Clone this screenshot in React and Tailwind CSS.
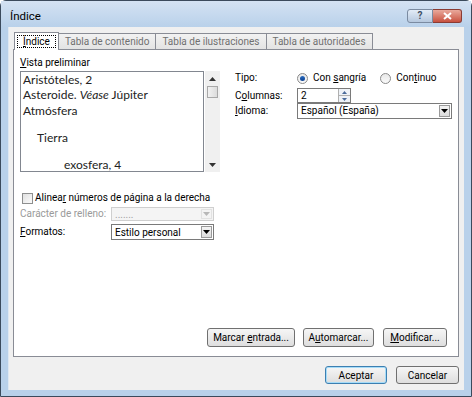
import React from 'react';

const U = ({ children }) => <span className="underline underline-offset-[1px]">{children}</span>;

const Arrow = ({ up = false, className = '' }) => (
  <svg width="7" height="4" viewBox="0 0 7 4" className={className}>
    {up ? <path d="M0 4 L7 4 L3.5 0 Z" fill="currentColor" /> : <path d="M0 0 L7 0 L3.5 4 Z" fill="currentColor" />}
  </svg>
);

const Button = ({ children, className = '', primary = false }) => (
  <div
    className={`flex items-center justify-center whitespace-nowrap rounded-[3px] border bg-gradient-to-b from-[#f6f6f6] to-[#dedede] text-[10px] text-black ${
      primary ? 'border-[#3c7fb1] shadow-[inset_0_0_0_1px_#a6dcf8]' : 'border-[#707070]'
    } ${className}`}
  >
    <span>{children}</span>
  </div>
);

const Combo = ({ value, className = '', disabled = false }) => (
  <div className={`flex items-stretch border ${disabled ? 'border-[#cfcfcf] bg-[#f4f4f4]' : 'border-[#7a7a7a] bg-white'} ${className}`}>
    <div className={`flex flex-1 items-center whitespace-nowrap pl-[3px] text-[10px] ${disabled ? 'text-[#a0a0a0]' : 'text-black'}`}>{value}</div>
    <div
      className={`m-[1px] flex w-[11px] items-center justify-center border ${
        disabled ? 'border-[#e2e2e2] text-[#b8b8b8]' : 'border-[#9a9a9a] bg-gradient-to-b from-[#f4f4f4] to-[#dcdcdc] text-black'
      }`}
    >
      <Arrow />
    </div>
  </div>
);

const Radio = ({ checked }) => (
  <div className="flex h-[11px] w-[11px] items-center justify-center rounded-full border border-[#8a8a8a] bg-gradient-to-b from-[#e8e8e8] to-[#fafafa]">
    {checked && <div className="h-[5px] w-[5px] rounded-full bg-gradient-to-b from-[#2a6cc0] to-[#0b3f8f]" />}
  </div>
);

const Tab = ({ children, active = false }) =>
  active ? (
    <div className="relative z-10 -mb-[1px] flex h-[18px] items-center border border-b-0 border-[#898c95] bg-white px-[2px]">
      <div className="flex h-[13px] items-center whitespace-nowrap border border-dotted border-black px-[5px] text-[10px] text-black">
        <span>{children}</span>
      </div>
    </div>
  ) : (
    <div className="mt-[1px] flex h-[16px] items-center whitespace-nowrap border border-b-0 border-l-0 border-[#898c95] bg-gradient-to-b from-[#f2f2f2] to-[#e3e3e3] px-[6px] text-[10px] text-[#707070]">
      {children}
    </div>
  );

const entries = [
  { text: 'Aristóteles, 2', cls: 'pl-[2px] mt-[1px]' },
  { text: null, cls: 'pl-[2px] mt-[2px]' },
  { text: 'Atmósfera', cls: 'pl-[2px] mt-[3px]' },
  { text: 'Tierra', cls: 'pl-[16px] mt-[14px]' },
  { text: 'exosfera, 4', cls: 'pl-[43px] mt-[14px]' },
];

export default function App() {
  return (
    <div className="h-[397px] w-[472px] bg-white font-['Roboto',sans-serif]">
      <div className="flex h-full w-full flex-col rounded-t-[6px] border border-[#3b4a5c] bg-[#b9d1ea] px-[7px] pb-[6px]">
        {/* Title bar */}
        <div className="-mx-[7px] flex h-[26px] items-start bg-gradient-to-b from-[#d4e2f3] to-[#b9d1ea] px-[9px]">
          <div className="mt-[8px] text-[11.5px] leading-[14px] text-black">Índice</div>
          <div className="ml-auto mt-[8px] flex">
            <div className="flex h-[14px] w-[26px] items-center justify-center rounded-l-[3px] border border-[#7b8ba1] bg-gradient-to-b from-[#e3ecf7] to-[#b6c8de] text-[10px] font-bold leading-none text-[#3f4f66]">
              ?
            </div>
            <div className="flex h-[14px] w-[29px] items-center justify-center rounded-r-[3px] border border-l-0 border-[#8a3b33] bg-gradient-to-b from-[#e9a99c] to-[#c7503f]">
              <svg width="9" height="8" viewBox="0 0 9 8">
                <path d="M1 1 L8 7 M8 1 L1 7" stroke="white" strokeWidth="2" />
              </svg>
            </div>
          </div>
        </div>

        {/* Client area */}
        <div className="flex flex-1 flex-col border-l border-[#dfe8f2] bg-[#f0f0f0] px-[4px] pt-[5px]">
          <div className="flex pl-[1px]">
            <Tab active>
              <U>Í</U>ndice
            </Tab>
            <Tab>Tabla de contenido</Tab>
            <Tab>Tabla de ilustraciones</Tab>
            <Tab>Tabla de autoridades</Tab>
          </div>

          <div className="flex h-[308px] w-[446px] flex-col border border-[#898c95] bg-white px-[6px] pt-[6px]">
            <div className="flex">
              {/* Left column */}
              <div className="flex w-[200px] flex-col">
                <div className="h-[15px] whitespace-nowrap text-[10px] leading-[14px] text-black">
                  <U>V</U>ista preliminar
                </div>
                <div className="flex h-[101px]">
                  <div className="flex w-[185px] flex-col border border-[#828790] bg-white font-['Lato',sans-serif] text-[12px] text-[#222]">
                    {entries.map((e, i) => (
                      <div key={i} className={`flex h-[13px] shrink-0 items-center whitespace-nowrap leading-[13px] ${e.cls}`}>
                        {e.text ?? (
                          <span>
                            Asteroide. <i>Véase</i> Júpiter
                          </span>
                        )}
                      </div>
                    ))}
                  </div>
                  <div className="ml-[1px] flex w-[15px] flex-col items-center bg-[#f0f0f0] text-[#333]">
                    <Arrow up className="mt-[6px]" />
                    <div className="mt-[5px] h-[12px] w-[11px] border border-[#a8a8a8] bg-gradient-to-r from-[#f2f2f2] to-[#dcdcdc]" />
                    <Arrow className="mb-[5px] mt-auto" />
                  </div>
                </div>

                <div className="mt-[19px] flex items-center">
                  <div className="ml-[2px] h-[11px] w-[11px] border border-[#8e8f8f] bg-gradient-to-br from-[#e0e0e0] to-[#fbfbfb]" />
                  <div className="ml-[2px] whitespace-nowrap text-[10px] leading-[14px] text-black">
                    Alinea<U>r</U> números de página a la derecha
                  </div>
                </div>
                <div className="mt-[2px] flex items-center">
                  <div className="w-[91px] whitespace-nowrap text-[10px] leading-[14px] text-[#9a9a9a]">Carácter de relleno:</div>
                  <Combo disabled value="......." className="h-[14px] w-[103px]" />
                </div>
                <div className="mt-[3px] flex items-center">
                  <div className="w-[91px] whitespace-nowrap text-[10px] leading-[14px] text-black">
                    <U>F</U>ormatos:
                  </div>
                  <Combo value="Estilo personal" className="h-[16px] w-[103px]" />
                </div>
              </div>

              {/* Right column */}
              <div className="ml-[15px] flex flex-col whitespace-nowrap pt-[14px] text-[10px] leading-[14px] text-black">
                <div className="flex h-[16px] items-center">
                  <div className="w-[62px]">Tipo:</div>
                  <Radio checked />
                  <div className="ml-[5px]">
                    Con <U>s</U>angría
                  </div>
                  <div className="ml-[14px]">
                    <Radio />
                  </div>
                  <div className="ml-[5px]">
                    Con<U>t</U>inuo
                  </div>
                </div>
                <div className="mt-[2px] flex h-[15px] items-center">
                  <div className="w-[62px]">
                    C<U>o</U>lumnas:
                  </div>
                  <div className="flex h-[15px] w-[54px] border border-[#7a7a7a] bg-white">
                    <div className="flex-1 pl-[3px] leading-[13px]">2</div>
                    <div className="flex w-[12px] flex-col border-l border-[#b0b0b0]">
                      <div className="flex flex-1 items-center justify-center border-b border-[#b0b0b0] bg-[#eef2f7] text-[#4a6a9a]">
                        <svg width="5" height="3" viewBox="0 0 5 3">
                          <path d="M0 3 L5 3 L2.5 0 Z" fill="currentColor" />
                        </svg>
                      </div>
                      <div className="flex flex-1 items-center justify-center bg-[#eef2f7] text-[#4a6a9a]">
                        <svg width="5" height="3" viewBox="0 0 5 3">
                          <path d="M0 0 L5 0 L2.5 3 Z" fill="currentColor" />
                        </svg>
                      </div>
                    </div>
                  </div>
                </div>
                <div className="flex h-[16px] items-center">
                  <div className="w-[62px]">
                    <U>I</U>dioma:
                  </div>
                  <Combo value="Español (España)" className="h-[16px] w-[155px]" />
                </div>
              </div>
            </div>

            <div className="mb-[9px] mt-auto flex justify-end pr-[5px]">
              <Button className="h-[19px] w-[88px]">
                Marcar <U>e</U>ntrada...
              </Button>
              <Button className="ml-[8px] h-[19px] w-[71px]">
                A<U>u</U>tomarcar...
              </Button>
              <Button className="ml-[9px] h-[19px] w-[64px]">
                <U>M</U>odificar...
              </Button>
            </div>
          </div>

          <div className="mt-[9px] flex justify-end gap-[9px] pr-[1px]">
            <Button primary className="h-[18px] w-[62px]">
              Aceptar
            </Button>
            <Button className="h-[18px] w-[63px]">Cancelar</Button>
          </div>
        </div>
      </div>
    </div>
  );
}
